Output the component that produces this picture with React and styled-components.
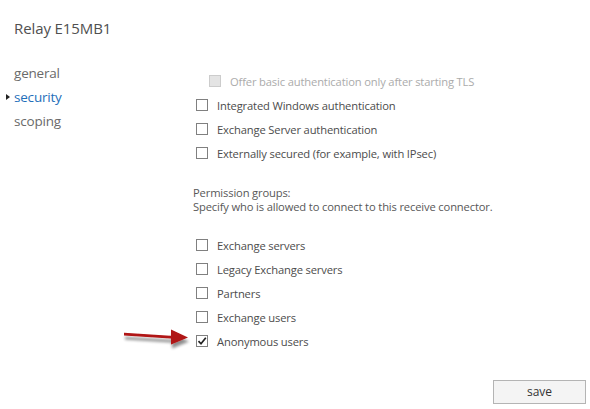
import styled, { createGlobalStyle } from "styled-components";

const GlobalStyle = createGlobalStyle`
  html, body {
    margin: 0;
    padding: 0;
    background: #ffffff;
  }
  body {
    font-family: "Open Sans", "Noto Sans", "Liberation Sans", sans-serif;
  }
`;

const Page = styled.div`
  position: relative;
  width: 590px;
  height: 409px;
  overflow: hidden;
  background: #ffffff;
  display: flex;
  flex-direction: column;
`;

const Title = styled.h1`
  margin: 0;
  padding: 18px 0 0 14px;
  height: 44px;
  box-sizing: border-box;
  font-size: 15px;
  font-weight: 400;
  color: #505050;
  letter-spacing: -0.1px;
`;

const Body = styled.div`
  display: flex;
  padding-top: 17px;
`;

const Nav = styled.ul`
  list-style: none;
  margin: 0;
  padding: 0 0 0 14px;
  width: 192px;
  box-sizing: border-box;
`;

const NavItem = styled.li`
  position: relative;
  height: 24px;
  line-height: 24px;
  font-size: 13.5px;
  letter-spacing: -0.2px;
  color: ${(p) => (p.$active ? "#1f6fba" : "#6a6a6a")};

  &::before {
    content: "";
    display: ${(p) => (p.$active ? "block" : "none")};
    position: absolute;
    left: -8px;
    top: 9px;
    border-left: 4px solid #222;
    border-top: 3.5px solid transparent;
    border-bottom: 3.5px solid transparent;
  }
`;

const Content = styled.div`
  flex: 1;
  padding-top: 8px;
  display: flex;
  flex-direction: column;
`;

const Group = styled.div`
  display: flex;
  flex-direction: column;
  padding-left: 4px;
`;

const Row = styled.label`
  display: flex;
  align-items: center;
  gap: 9px;
  height: 24px;
  padding-left: ${(p) => (p.$indent ? "13px" : "0")};
  font-size: 11.2px;
  letter-spacing: -0.15px;
  color: ${(p) => (p.$disabled ? "#ababab" : "#4c4c4c")};
`;

const Box = styled.span`
  width: 12px;
  height: 12px;
  box-sizing: border-box;
  border: 1px solid ${(p) => (p.$disabled ? "#cccccc" : "#808080")};
  background: ${(p) => (p.$disabled ? "#e4e4e4" : "#ffffff")};
  display: flex;
  align-items: center;
  justify-content: center;
  flex-shrink: 0;
`;

const Description = styled.div`
  margin-top: 21px;
  margin-bottom: 19px;
  padding-left: 1px;
  font-size: 11.2px;
  line-height: 14px;
  letter-spacing: -0.15px;
  color: #585858;
`;

const Footer = styled.div`
  margin-top: auto;
  display: flex;
  justify-content: flex-end;
  padding: 0 4px 5px 0;
`;

const SaveButton = styled.button`
  width: 93px;
  height: 24px;
  border: 1px solid #b4b4b4;
  background: #f4f4f4;
  color: #333333;
  font-family: inherit;
  font-size: 12px;
  padding: 0 0 2px;
`;

const Pointer = styled.svg`
  position: absolute;
  left: 120px;
  top: 325px;
  overflow: visible;
`;

const Check = () => (
  <svg width="10" height="10" viewBox="0 0 10 10">
    <path d="M1.5 5.2 L4 7.8 L8.8 1.8" fill="none" stroke="#222" strokeWidth="1.7" />
  </svg>
);

const Checkbox = ({ label, checked, disabled, indent }) => (
  <Row $disabled={disabled} $indent={indent}>
    <Box $disabled={disabled}>{checked && <Check />}</Box>
    {label}
  </Row>
);

const App = () => {
  return (
    <Page>
      <GlobalStyle />
      <Title>Relay E15MB1</Title>
      <Body>
        <Nav>
          <NavItem>general</NavItem>
          <NavItem $active>security</NavItem>
          <NavItem>scoping</NavItem>
        </Nav>
        <Content>
          <Group>
            <Checkbox indent disabled label="Offer basic authentication only after starting TLS" />
            <Checkbox label="Integrated Windows authentication" />
            <Checkbox label="Exchange Server authentication" />
            <Checkbox label="Externally secured (for example, with IPsec)" />
          </Group>
          <Description>
            Permission groups:
            <br />
            Specify who is allowed to connect to this receive connector.
          </Description>
          <Group>
            <Checkbox label="Exchange servers" />
            <Checkbox label="Legacy Exchange servers" />
            <Checkbox label="Partners" />
            <Checkbox label="Exchange users" />
            <Checkbox checked label="Anonymous users" />
          </Group>
        </Content>
      </Body>
      <Footer>
        <SaveButton>save</SaveButton>
      </Footer>
      <Pointer width="75" height="24" viewBox="0 0 75 24">
        <defs>
          <filter id="shadow" x="-20%" y="-50%" width="140%" height="250%">
            <feGaussianBlur in="SourceAlpha" stdDeviation="1.6" />
            <feOffset dx="1" dy="4" />
            <feComponentTransfer>
              <feFuncA type="linear" slope="0.45" />
            </feComponentTransfer>
            <feMerge>
              <feMergeNode />
              <feMergeNode in="SourceGraphic" />
            </feMerge>
          </filter>
        </defs>
        <g filter="url(#shadow)">
          <path d="M4 7.8 L54 11 L54 13.8 L4 10.4 Z" fill="#b01313" />
          <path d="M51 4.5 L68 12.6 L51 19.5 Z" fill="#b01313" />
        </g>
      </Pointer>
    </Page>
  );
};

export default App;
